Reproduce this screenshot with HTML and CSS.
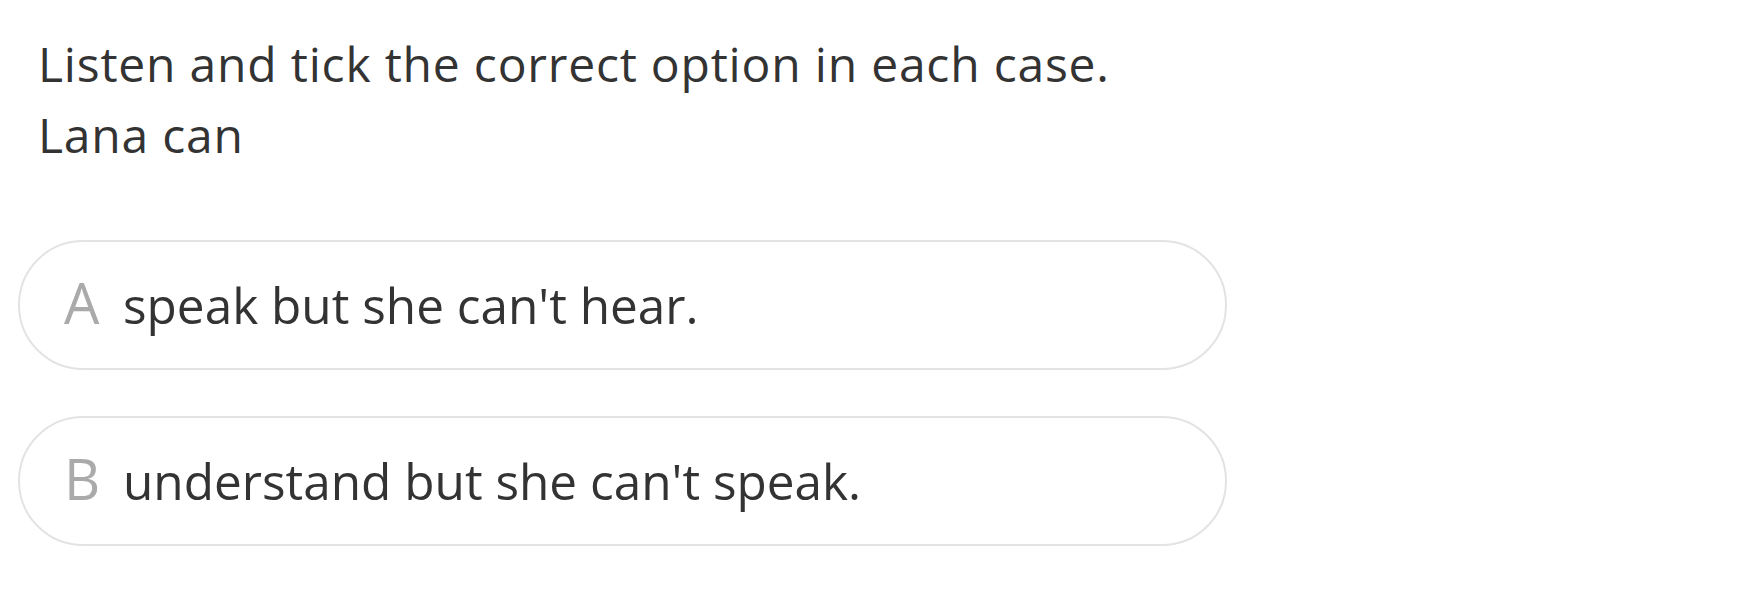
FILE: index.html
```html
<!DOCTYPE html>
<html lang="en">
<head>
<meta charset="utf-8">
<title>Listening exercise</title>
<link rel="stylesheet" href="styles.css">
</head>
<body>
<main class="page">
  <div class="question">
    <p class="line">Listen and tick the correct option in each case.</p>
    <p class="line">Lana can</p>
  </div>
  <div class="options">
    <div class="option"><span class="letter">A</span><span class="text">speak but she can't hear.</span></div>
    <div class="option"><span class="letter">B</span><span class="text">understand but she can't speak.</span></div>
  </div>
</main>
</body>
</html>
```
FILE: styles.css
```css
html, body {
  margin: 0;
  padding: 0;
  background: #ffffff;
}
.page {
  padding-top: 28px;
  font-family: "Open Sans", "Noto Sans", sans-serif;
  color: #333333;
}
.question {
  padding-left: 38px;
}
.line {
  margin: 0;
  font-size: 48px;
  line-height: 71px;
  letter-spacing: 0.8px;
}
.options {
  margin: 70px 0 0 18px;
  width: 1209px;
  display: flex;
  flex-direction: column;
  gap: 46px;
}
.option {
  box-sizing: border-box;
  height: 130px;
  border: 2px solid #e3e3e3;
  border-radius: 65px;
  padding-left: 44px;
  font-size: 49.5px;
  line-height: 126px;
  white-space: nowrap;
}
.letter {
  display: inline-block;
  width: 59px;
  font-size: 56px;
  line-height: 1;
  color: #aaaaaa;
}
.text {
  color: #333333;
}
```
